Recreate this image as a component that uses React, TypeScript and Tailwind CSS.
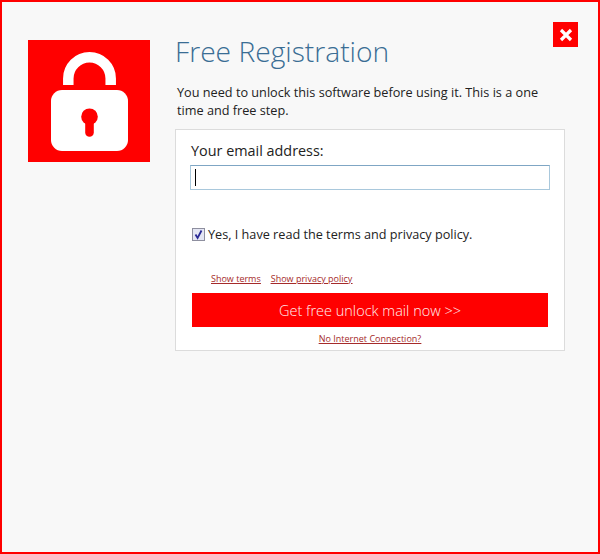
import { useState } from "react";

/** Free registration dialog */
export default function App() {
  const [agreed, setAgreed] = useState(true);

  return (
    <div className="relative h-[554px] w-[600px] overflow-hidden border-2 border-[#ff0000] bg-[#f8f8f8] font-['Open_Sans',sans-serif]">
      {/* Close button */}
      <button className="absolute left-[551px] top-[20px] flex h-[25px] w-[25px] items-center justify-center bg-[#ff0000]">
        <svg width="14" height="14" viewBox="0 0 14 14">
          <path d="M2 2 L12 12 M12 2 L2 12" stroke="#fff" strokeWidth="3.2" />
        </svg>
      </button>

      <div className="flex pl-[26px] pt-[38px]">
        {/* Lock logo */}
        <div className="h-[122px] w-[122px] shrink-0 bg-[#ff0000]">
          <svg width="122" height="122" viewBox="0 0 122 122">
            <path
              d="M40.3 45 V38.5 A21.2 21.2 0 0 1 82.7 38.5 V45"
              fill="none"
              stroke="#fff"
              strokeWidth="10.5"
            />
            <rect x="23" y="50" width="77" height="61" rx="11" fill="#fff" />
            <circle cx="61.5" cy="76.7" r="8.3" fill="#ff0000" />
            <path d="M61.5 78 V92.4" stroke="#ff0000" strokeWidth="8.6" strokeLinecap="round" />
          </svg>
        </div>

        <div className="ml-[25px] w-[390px]">
          <h1 className="text-[28.2px] font-light leading-[22px] text-[#3a6d94]">Free Registration</h1>

          <p className="mt-[21px] pl-[2px] text-[12.7px] leading-[18px] text-[#222]">
            You need to unlock this software before using it. This is a one
            <br />
            time and free step.
          </p>

          {/* Form card */}
          <div className="mt-[10px] h-[222px] w-[390px] border border-[#dcdcdc] bg-white px-[15px] pt-[11px]">
            <label className="block text-[14.4px] leading-[20px] text-[#222]">Your email address:</label>
            <div className="-ml-[1px] mt-[4px] flex h-[25px] w-[360px] items-center border border-[#a9c8dc] border-t-[#7fa6c4] bg-white pl-[4px]">
              <div className="h-[17px] w-px bg-black" />
            </div>

            <label className="mt-[35px] flex items-center gap-[3px] text-[12.66px] leading-[18px] text-[#222]">
              <span
                onClick={() => setAgreed(!agreed)}
                className="ml-[1px] flex h-[13px] w-[13px] items-center justify-center border border-[#8e8f9f] bg-[#e4e6f4]"
              >
                {agreed && (
                  <svg width="11" height="11" viewBox="0 0 11 11">
                    <path d="M2.5 5.5 L4.6 9 L8.5 1.5" fill="none" stroke="#2a2a96" strokeWidth="1.8" />
                  </svg>
                )}
              </span>
              Yes, I have read the terms and privacy policy.
            </label>

            <div className="ml-[20px] mt-[29px] flex gap-[10px] text-[9px] leading-[14px] text-[#a52a2a] underline">
              <a>Show terms</a>
              <a>Show privacy policy</a>
            </div>

            <button className="ml-[1px] mt-[7px] block h-[34px] w-[356px] bg-[#ff0000] pt-[1px] text-[14.5px] font-light text-[#fff0f0]">
              Get free unlock mail now &gt;&gt;
            </button>

            <div className="mt-[5px] text-center text-[9px] leading-[14px] text-[#a52a2a] underline">
              <a>No Internet Connection?</a>
            </div>
          </div>
        </div>
      </div>
    </div>
  );
}
